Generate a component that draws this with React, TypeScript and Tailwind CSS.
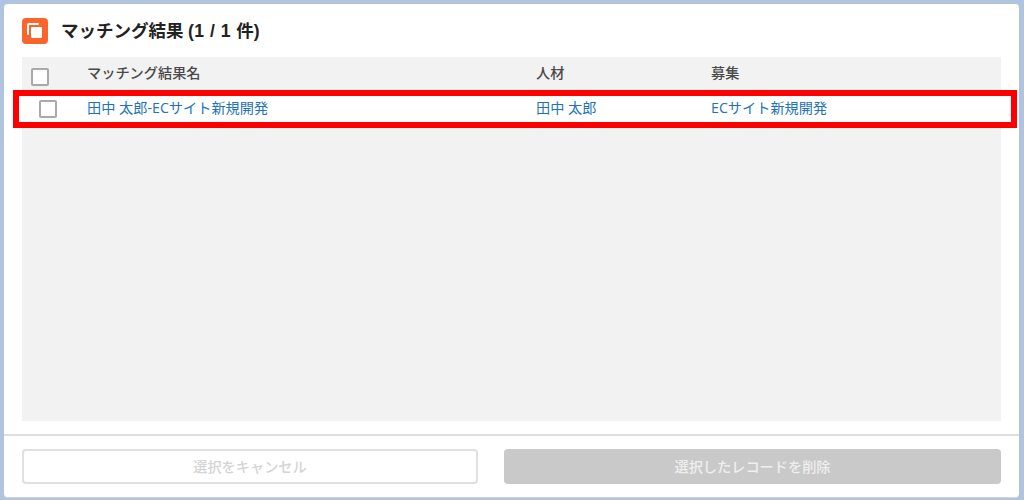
import React from 'react';

const font = { fontFamily: '"Open Sans", "Noto Sans CJK JP", sans-serif' };

function Check() {
  return <span className="block w-[18px] h-[18px] rounded-[2px] border-2 border-[#a9a9a9] bg-white" />;
}

export default function App() {
  return (
    <div className="w-[1024px] h-[500px] bg-[#b0c4df] pt-1 pl-1 pr-[5px] pb-[2px] overflow-hidden" style={font}>
      <div className="relative flex flex-col h-full bg-white rounded-[4px] border-b border-[#d4d4d4]">
        <header className="flex items-center h-[53px] pl-[18px] shrink-0">
          <span className="flex items-center justify-center w-[26px] h-[26px] rounded-[4px] bg-[#f9652d]">
            <svg width="20" height="20" viewBox="0 0 20 20" fill="none">
              <path d="M3 13V4.3C3 3.6 3.6 3 4.3 3H13" stroke="#fff" strokeWidth="2" strokeLinecap="round" />
              <rect x="6" y="6" width="11" height="11" rx="1.2" fill="#fff" />
            </svg>
          </span>
          <h1 className="ml-[13px] text-[17.5px] leading-none font-bold text-[#222] mt-px">
            マッチング結果 <span className="font-['Liberation_Sans'] text-[17.5px] tracking-[0.5px]">(1 / 1 </span>件<span className="font-['Liberation_Sans'] text-[17.5px]">)</span>
          </h1>
        </header>

        <div className="flex-1 mx-[18px] bg-[#f2f2f2]">
          <div className="flex items-center h-[33px] text-[14.2px] font-medium text-[#4a4a4a]">
            <div className="w-[65px] pl-[9px] pt-[7px] shrink-0"><Check /></div>
            <div className="w-[449px] shrink-0 -mt-[2px]">マッチング結果名</div>
            <div className="w-[175px] shrink-0 -mt-[2px]">人材</div>
            <div className="-mt-[2px]">募集</div>
          </div>
          <div className="flex items-center h-[38px] bg-white text-[14.2px] text-[#2272b9]">
            <div className="w-[65px] pl-[17px] shrink-0"><Check /></div>
            <div className="w-[449px] shrink-0 -mt-[3px]">田中 太郎-ECサイト新規開発</div>
            <div className="w-[175px] shrink-0 -mt-[3px]">田中 太郎</div>
            <div className="-mt-[3px]">ECサイト新規開発</div>
          </div>
        </div>

        <footer className="flex gap-[26px] mt-[13px] h-[63px] px-[18px] pt-[13px] pb-[14px] border-t-2 border-[#dedede] shrink-0">
          <button className="w-[456px] h-[35px] rounded-[4px] border-2 border-[#e0e0e0] bg-white text-[14.2px] font-medium text-[#d4d4d4]">
            選択をキャンセル
          </button>
          <button className="flex-1 h-[35px] rounded-[4px] bg-[#c9c9c9] text-[14.2px] font-medium text-[#efefef]">
            選択したレコードを削除
          </button>
        </footer>

        {/* red highlight annotation over the row */}
        <div className="absolute left-[9px] top-[86px] w-[1004px] h-[38px] border-[6px] border-[#ff0000] pointer-events-none" />
      </div>
    </div>
  );
}
